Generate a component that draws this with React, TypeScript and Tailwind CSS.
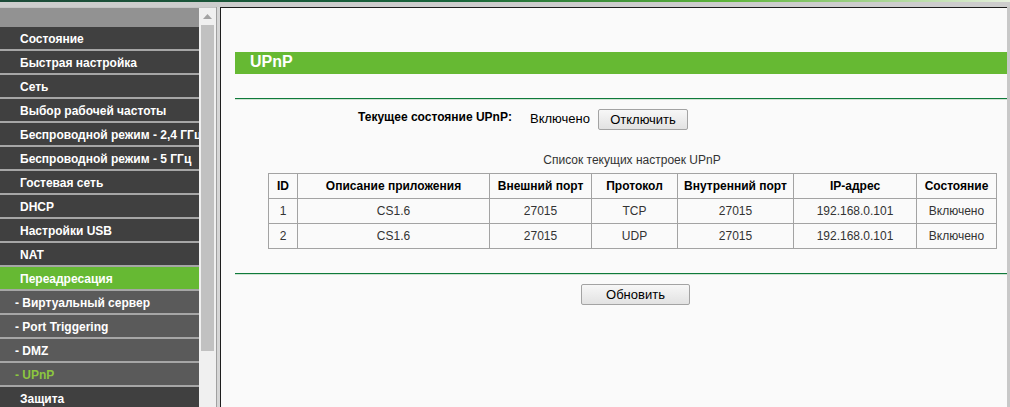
const menu = [
  { label: 'Состояние', kind: 'main' },
  { label: 'Быстрая настройка', kind: 'main' },
  { label: 'Сеть', kind: 'main' },
  { label: 'Выбор рабочей частоты', kind: 'main' },
  { label: 'Беспроводной режим - 2,4 ГГц', kind: 'main' },
  { label: 'Беспроводной режим - 5 ГГц', kind: 'main' },
  { label: 'Гостевая сеть', kind: 'main' },
  { label: 'DHCP', kind: 'main' },
  { label: 'Настройки USB', kind: 'main' },
  { label: 'NAT', kind: 'main' },
  { label: 'Переадресация', kind: 'open' },
  { label: '- Виртуальный сервер', kind: 'sub' },
  { label: '- Port Triggering', kind: 'sub' },
  { label: '- DMZ', kind: 'sub' },
  { label: '- UPnP', kind: 'current' },
  { label: 'Защита', kind: 'main' },
];

const columns = [
  { title: 'ID', width: 'w-[29px]' },
  { title: 'Описание приложения', width: 'w-[192px]' },
  { title: 'Внешний порт', width: 'w-[102px]' },
  { title: 'Протокол', width: 'w-[86px]' },
  { title: 'Внутренний порт', width: 'w-[116px]' },
  { title: 'IP-адрес', width: 'w-[123px]' },
  { title: 'Состояние', width: 'w-[80px]' },
];

const rules = [
  { id: '1', app: 'CS1.6', ext: '27015', proto: 'TCP', int: '27015', ip: '192.168.0.101', state: 'Включено' },
  { id: '2', app: 'CS1.6', ext: '27015', proto: 'UDP', int: '27015', ip: '192.168.0.101', state: 'Включено' },
];

function MenuItem({ label, kind }: { label: string; kind: string }) {
  // sub items are indented less and sit on a lighter grey
  let cls = 'bg-[#404040] text-white pl-[20px]';
  if (kind === 'open') cls = 'bg-[#66b933] text-white pl-[20px]';
  if (kind === 'sub') cls = 'bg-[#5a5a5a] text-white pl-[15px]';
  if (kind === 'current') cls = 'bg-[#5a5a5a] text-[#8cc63f] pl-[15px]';

  return (
    <div className={`h-[21px] pt-[1px] shrink-0 flex items-center whitespace-nowrap overflow-hidden text-[12px] font-bold border-b-2 border-[#a6a6a6] box-content ${cls}`}>
      {label}
    </div>
  );
}

function GreyButton({ children, width }: { children: string; width: string }) {
  return (
    <button className={`${width} h-[21px] text-[13px] text-black border border-[#a3a3a3] rounded-[2px] bg-[linear-gradient(to_bottom,#f7f7f7,#e2e2e2)] leading-none`}>
      {children}
    </button>
  );
}

export default function App() {
  return (
    <div className="w-[1010px] h-[407px] overflow-hidden flex flex-col bg-[#fafafa] font-['Liberation_Sans',Arial,sans-serif]">
      <div className="h-[2px] shrink-0 bg-[linear-gradient(to_right,#1c4a38_0%,#17633a_45%,#5db43a_72%,#e6f0de_100%)]" />
      <div className="h-[5px] shrink-0 bg-[#cdcdcd]" />

      <div className="flex flex-1 min-h-0">
        {/* left frame: menu */}
        <div className="w-[199px] shrink-0 flex flex-col overflow-hidden border-t border-[#c4c4c4]">
          <div className="h-[19px] shrink-0 bg-[#929292]" />
          {menu.map((m) => (
            <MenuItem key={m.label} label={m.label} kind={m.kind} />
          ))}
        </div>

        {/* menu scrollbar */}
        <div className="w-[17px] shrink-0 bg-[#f0f0f0] flex flex-col items-center border-t border-[#c4c4c4]">
          <div className="h-[17px] w-full flex items-center justify-center">
            <svg width="9" height="5" viewBox="0 0 9 5">
              <polygon points="4.5,0 9,5 0,5" fill="#a3a3a3" />
            </svg>
          </div>
          <div className="w-[13px] h-[326px] bg-[#c1c1c1]" />
        </div>

        <div className="w-[1px] shrink-0 bg-[#a0a0a0]" />
        <div className="w-[3px] shrink-0 bg-[#d6d6d6]" />

        {/* right frame: page */}
        <div className="flex-1 min-w-0 border-t border-l border-[#1e1e1e] bg-[#fafafa] pl-[14px] pt-[44px] flex flex-col">
          <div className="h-[22px] bg-[#66b933] text-white font-bold text-[16px] pl-[15px] flex items-center pb-[3px]">
            UPnP
          </div>

          <div className="mt-[24px] h-[1px] bg-[#0f7a3b]" />
          <div className="h-[1px] bg-[#cfe3d3]" />

          <div className="mt-[8px] flex items-center pl-[123px] text-black">
            <span className="w-[172px] font-bold text-[12px] pb-[4px]">Текущее состояние UPnP:</span>
            <span className="w-[68px] text-[13px]">Включено</span>
            <GreyButton width="w-[90px]">Отключить</GreyButton>
          </div>

          <div className="mt-[23px] ml-[33px] w-[728px] text-center text-[12px] leading-[14px] text-[#333]">
            Список текущих настроек UPnP
          </div>

          <table className="mt-[6px] ml-[33px] w-[728px] border-collapse text-[12px] table-fixed">
            <thead>
              <tr className="h-[25px]">
                {columns.map((c) => (
                  <th key={c.title} className={`${c.width} border border-[#a3a3a3] font-bold text-black text-center p-0`}>
                    {c.title}
                  </th>
                ))}
              </tr>
            </thead>
            <tbody>
              {rules.map((r) => (
                <tr key={r.id} className="h-[25px] text-[#333]">
                  <td className="border border-[#a3a3a3] text-center p-0">{r.id}</td>
                  <td className="border border-[#a3a3a3] text-center p-0">{r.app}</td>
                  <td className="border border-[#a3a3a3] text-center p-0">{r.ext}</td>
                  <td className="border border-[#a3a3a3] text-center p-0">{r.proto}</td>
                  <td className="border border-[#a3a3a3] text-center p-0">{r.int}</td>
                  <td className="border border-[#a3a3a3] text-center p-0">{r.ip}</td>
                  <td className="border border-[#a3a3a3] text-center p-0">{r.state}</td>
                </tr>
              ))}
            </tbody>
          </table>

          <div className="mt-[24px] h-[1px] bg-[#0f7a3b]" />
          <div className="h-[1px] bg-[#cfe3d3]" />

          <div className="mt-[7px] pl-[346px]">
            <GreyButton width="w-[109px]">Обновить</GreyButton>
          </div>
        </div>

        <div className="w-[3px] shrink-0 bg-[#c8c8c8]" />
      </div>
    </div>
  );
}
